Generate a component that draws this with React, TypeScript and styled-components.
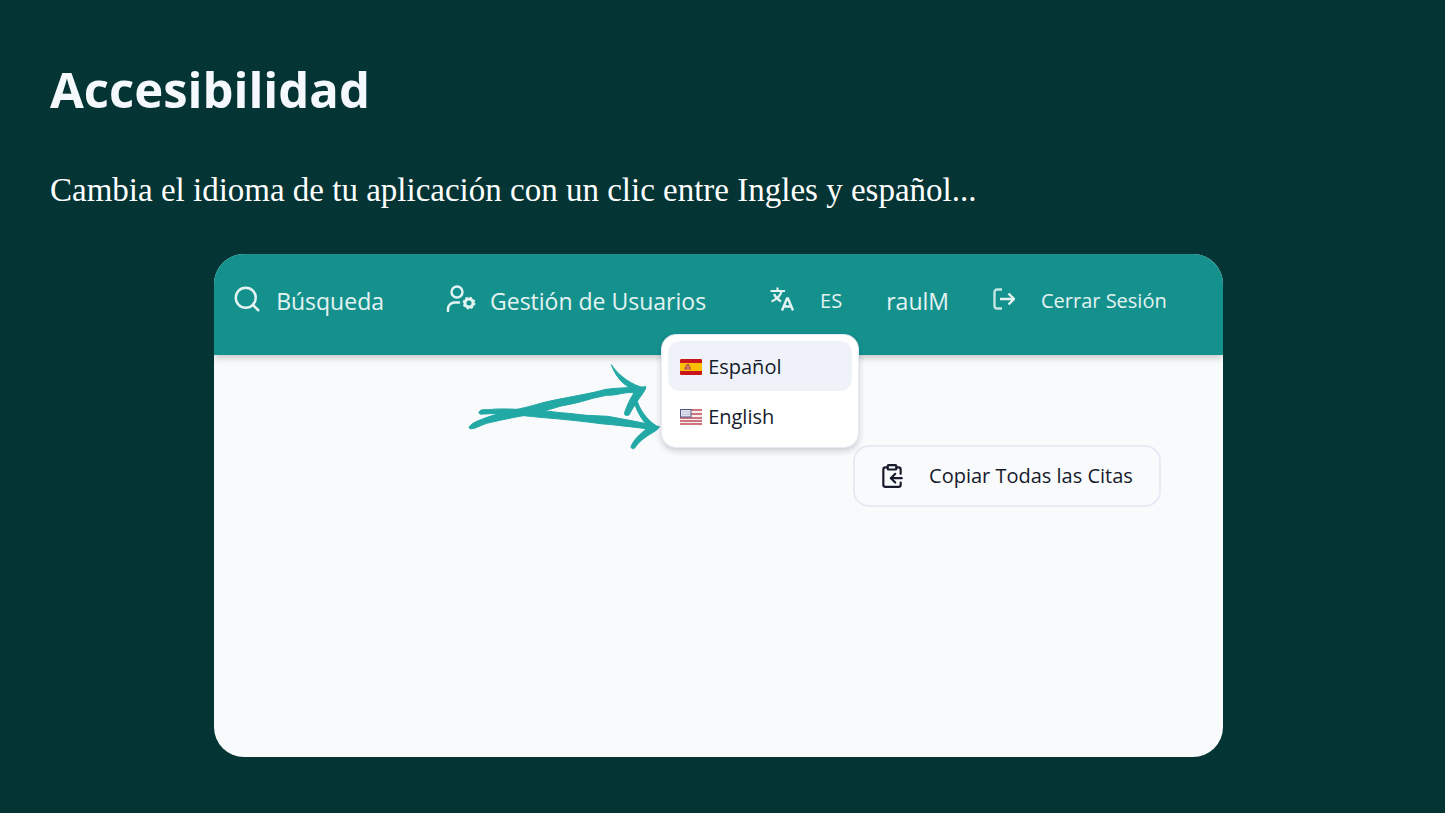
import React from "react";
import styled, { createGlobalStyle } from "styled-components";
import { Search, ClipboardCopy } from "lucide-react";

const GlobalStyle = createGlobalStyle`
  * { box-sizing: border-box; }
  body { margin: 0; background: #043434; }
`;

const Slide = styled.main`
  min-height: 100vh;
  padding: 54px 50px 56px;
  font-family: "Open Sans", sans-serif;
  background: #043434;
`;

const Title = styled.h1`
  margin: 0;
  font-size: 49px;
  line-height: 70px;
  font-weight: 700;
  color: #f5f8fc;
`;

const Lead = styled.p`
  margin: 42px 0 0;
  font-family: "Liberation Serif", serif;
  font-size: 33px;
  line-height: 48px;
  color: #fff;
`;

const Screen = styled.section`
  position: relative;
  width: 75%;
  max-width: 1009px;
  margin: 40px auto 0;
  left: -4px;
  border-radius: 30px;
  background: #f9fafc;
  overflow: hidden;
`;

const NavBar = styled.header`
  display: flex;
  align-items: center;
  height: 101px;
  padding: 0 56px 8px 18px;
  background: #15918d;
  box-shadow: 0 2px 8px rgba(0, 0, 0, 0.24);
  color: #e4f3f2;
`;

const NavLink = styled.a<{ $gap: number; $after: number; $small?: boolean }>`
  display: flex;
  align-items: center;
  gap: ${(p) => p.$gap}px;
  margin-right: ${(p) => p.$after}px;
  font-size: ${(p) => (p.$small ? 20 : 23)}px;
  line-height: 32px;
  color: inherit;
  text-decoration: none;
  white-space: nowrap;

  svg {
    flex: none;
    margin-bottom: 4px;
  }
`;

const NavButton = styled(NavLink).attrs({ as: "button" })`
  padding: 0;
  border: 0;
  background: none;
  font-family: inherit;
`;

const Content = styled.div`
  display: flex;
  justify-content: flex-end;
  align-items: flex-start;
  min-height: 402px;
  padding: 90px 62px 0 0;
`;

const CopyButton = styled.button`
  display: flex;
  align-items: center;
  gap: 24px;
  height: 62px;
  padding: 0 26px 0 24px;
  border: 2px solid #e6eaf3;
  border-radius: 16px;
  background: #f9fafc;
  font: 20px/32px "Open Sans", sans-serif;
  color: #161b2c;
  white-space: nowrap;
`;

const Menu = styled.div`
  position: absolute;
  top: 80px;
  left: 447px;
  width: 198px;
  padding: 6px;
  border: 1px solid #e6eaf3;
  border-radius: 15px;
  background: #fff;
  box-shadow: 0 3px 6px rgba(20, 30, 50, 0.2);
`;

const MenuItem = styled.button<{ $active?: boolean }>`
  display: flex;
  align-items: center;
  gap: 6px;
  width: 100%;
  height: 50px;
  padding: 2px 12px 0;
  border: 0;
  border-radius: 12px;
  background: ${(p) => (p.$active ? "#eff3f9" : "transparent")};
  font: 20px/32px "Open Sans", sans-serif;
  color: #161b2c;
`;

const Arrows = styled.svg`
  position: absolute;
  top: 101px;
  left: 246px;
`;

const UserCogIcon = () => (
  <svg width="30" height="28" viewBox="0 0 30 28" fill="none" stroke="currentColor" strokeLinecap="round" aria-hidden="true">
    <circle cx="11" cy="7" r="5.500" strokeWidth="2.400" />
    <path d="M2 26v-2a6.500 6.500 0 0 1 6.500-6.500H13" strokeWidth="2.500" />
    <circle cx="23" cy="18" r="4" strokeWidth="3" />
    <circle cx="23" cy="18" r="5.500" strokeWidth="1.800" strokeLinecap="butt" strokeDasharray="2.200 2.120" />
  </svg>
);

const TranslateIcon = () => (
  <svg width="24" height="24" viewBox="0 0 24 24" fill="none" stroke="currentColor" strokeWidth="2.200" aria-hidden="true">
    <path d="M7.500 0.500V4M0.500 4h14.500M11.500 4.500C10.500 8.500 6 12.500 1.500 14.500M4 7c1.500 3.500 4.500 6 7 7.500" />
    <path d="M12 23.500 17 11.500h1l5 12M13.800 19.500h7.400" strokeWidth="2.400" />
  </svg>
);

const LogoutIcon = () => (
  <svg width="22" height="22" viewBox="0 0 22 22" fill="none" stroke="currentColor" strokeWidth="2.400" aria-hidden="true">
    <path d="M9 1.500H4A2.500 2.500 0 0 0 1.500 4v14A2.500 2.500 0 0 0 4 20.500h5" opacity="0.850" />
    <path d="M7 11h14M15.500 5.500 21 11l-5.500 5.500" />
  </svg>
);

const SpainFlag = () => (
  <svg width="22" height="16" viewBox="0 0 22 16" aria-hidden="true">
    <rect width="22" height="16" rx="1" fill="#fbc000" />
    <path d="M1 0h20l1 1v3H0V1zM0 12h22v3l-1 1H1l-1-1z" fill="#c9151c" />
    <path d="M4 11V9l1-1V6l2-1 3 1v1l1 1v3z" fill="#df7b45" />
    <path d="M5 8h2v2H5zM9 8h1v2H9zM7 5h2v2H7z" fill="#a95558" />
  </svg>
);

const UsaFlag = () => (
  <svg width="22" height="16" viewBox="0 0 22 16" aria-hidden="true">
    <rect width="22" height="16" fill="#f5eeee" />
    <path d="M0 1h22M0 5h22M0 9h22M0 12h22M0 15h22" stroke="#c44d5b" strokeWidth="1.500" />
    <rect x="0.500" y="0.500" width="10.500" height="7.500" fill="#dfe1ef" stroke="#545783" />
    <path d="M2.500 3h7M2.500 5.500h7" stroke="#a9abc4" strokeDasharray="1 1" />
  </svg>
);

export default function App() {
  return (
    <>
      <GlobalStyle />
      <Slide>
        <Title>Accesibilidad</Title>
        <Lead>Cambia el idioma de tu aplicación con un clic entre Ingles y español...</Lead>
        <Screen>
          <NavBar>
            <NavLink href="#busqueda" $gap={14} $after={62}>
              <Search size={30} strokeWidth={2} />
              Búsqueda
            </NavLink>
            <NavLink href="#usuarios" $gap={14} $after={64}>
              <UserCogIcon />
              Gestión de Usuarios
            </NavLink>
            <NavButton $gap={26} $after={44} $small>
              <TranslateIcon />
              ES
            </NavButton>
            <NavLink href="#perfil" $gap={0} $after={44}>
              raulM
            </NavLink>
            <NavButton $gap={26} $after={0} $small>
              <LogoutIcon />
              Cerrar Sesión
            </NavButton>
          </NavBar>
          <Content>
            <CopyButton>
              <ClipboardCopy size={26} />
              Copiar Todas las Citas
            </CopyButton>
          </Content>
          <Arrows width="210" height="100" viewBox="0 0 630 300" aria-hidden="true">
            <g fill="#22a9a5" stroke="#22a9a5" strokeWidth="3" strokeLinejoin="round">
              <path d="M28 216C36 203 52 198 78 188C120 173 170 165 228 149C270 136 308 131 342 124L402 112L438 103C470 99 498 98 534 97L558 95C556 107 547 116 538 130C525 148 515 165 507 180C500 183 490 181 494 172C502 150 510 131 522 114C500 108 472 122 440 121L402 129L352 143L300 154L242 171C190 183 130 192 80 205C60 211 48 221 36 221C30 222 26 220 28 216Z" />
              <path d="M454 29C470 54 502 82 542 96L524 105C488 91 466 63 454 29Z" />
              <path d="M57 173C58 164 71 163 84 164C118 160 154 162 190 164C242 164 280 172 326 175L380 181L444 184L520 198L568 208L599 215C589 231 568 236 552 250C538 260 530 271 523 280C517 283 511 279 514 273C521 254 539 238 560 221C516 216 470 210 422 206C364 198 300 192 240 187C180 181 120 173 74 177C64 178 57 178 57 173Z" />
              <path d="M530 133C538 162 558 192 588 212L570 219C543 194 532 169 524 147Z" />
            </g>
          </Arrows>
          <Menu>
            <MenuItem $active>
              <SpainFlag />
              Español
            </MenuItem>
            <MenuItem>
              <UsaFlag />
              English
            </MenuItem>
          </Menu>
        </Screen>
      </Slide>
    </>
  );
}
